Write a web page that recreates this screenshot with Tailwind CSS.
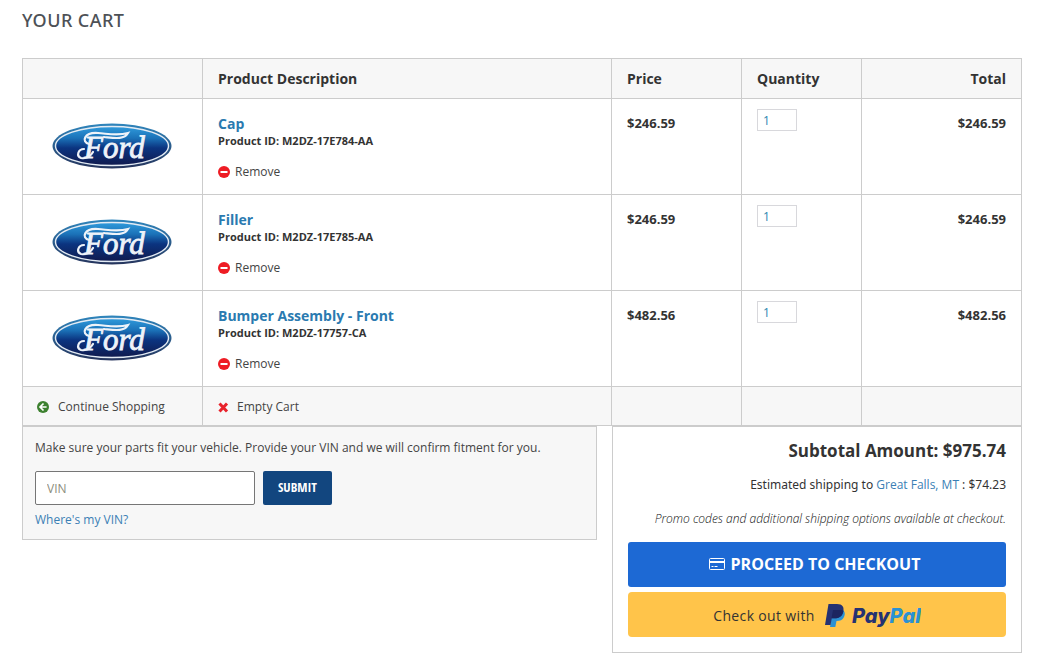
<!DOCTYPE html>
<html lang="en">
<head>
    <meta charset="UTF-8">
    <meta name="viewport" content="width=device-width, initial-scale=1.0">
    <title>Your Cart</title>
    <script src="https://cdn.jsdelivr.net/npm/@tailwindcss/browser@4"></script>
</head>
<body class="bg-white font-['Open_Sans',sans-serif] text-[12px] text-[#333]">
    <main class="pt-[10px] pr-[17px] pb-[14px] pl-[22px]">
        <h1 class="font-['Noto_Sans','Open_Sans',sans-serif] text-[18px] leading-[20px] font-medium tracking-wide text-[#4d5156]">YOUR CART</h1>

        <table class="mt-7 w-full table-fixed border-collapse [&_td]:border [&_td]:border-[#ccc] [&_th]:border [&_th]:border-[#ccc]">
            <colgroup>
                <col class="w-[180px]">
                <col>
                <col class="w-[130px]">
                <col class="w-[120px]">
                <col class="w-[160px]">
            </colgroup>
            <thead>
                <tr class="h-10 bg-[#f7f7f7] text-left text-[14px]">
                    <th></th>
                    <th class="px-[15px] font-bold">Product Description</th>
                    <th class="px-[15px] font-bold">Price</th>
                    <th class="px-[15px] font-bold">Quantity</th>
                    <th class="px-[15px] text-right font-bold">Total</th>
                </tr>
            </thead>
            <tbody>
                <tr class="h-24 align-top">
                    <td class="pt-6 pr-[2px]">
                        <!-- The other rows reuse this logo and the minus icon -->
                        <svg class="mx-auto h-[46px] w-[120px]" viewBox="0 0 120 46" role="img" aria-label="Ford">
                            <defs>
                                <linearGradient id="fordBlue" x1="0" y1="0" x2="0" y2="1">
                                    <stop offset="0" stop-color="#2f9bdc"/>
                                    <stop offset="0.3" stop-color="#1b72b8"/>
                                    <stop offset="0.55" stop-color="#0b3480"/>
                                    <stop offset="1" stop-color="#101a4e"/>
                                </linearGradient>
                                <linearGradient id="fordRim" x1="0" y1="0" x2="0" y2="1">
                                    <stop offset="0" stop-color="#2f86bd"/>
                                    <stop offset="1" stop-color="#26345c"/>
                                </linearGradient>
                            </defs>
                            <g id="ford">
                                <ellipse cx="60" cy="23" rx="59.5" ry="22.5" fill="url(#fordRim)"/>
                                <ellipse cx="60" cy="23" rx="56.5" ry="19.5" fill="url(#fordBlue)" stroke="#e3ebf4" stroke-width="1.4"/>
                                <path d="M37 21 C29 19 32 9 46 10 C58 11 66 13 76 10 C72 17 62 15 52 14" fill="none" stroke="#eef3f9" stroke-width="2.2" stroke-linecap="round"/>
                                <path d="M32 26 C26 26 24 33 29 35 C34 36 38 34 41 29" fill="none" stroke="#eef3f9" stroke-width="2.2" stroke-linecap="round"/>
                                <text x="32" y="35" font-family="Liberation Serif, serif" font-size="31" font-style="italic" fill="#eef3f9" stroke="#eef3f9" stroke-width="0.8">Ford</text>
                            </g>
                        </svg>
                    </td>
                    <td class="px-[15px] pt-4">
                        <a href="#" class="block text-[14px] leading-[18px] font-bold text-[#2a7ab0]">Cap</a>
                        <p class="text-[11px] leading-4 font-bold">Product ID: M2DZ-17E784-AA</p>
                        <button type="button" class="mt-[13px] flex items-center gap-[5px] leading-5 text-[#444]">
                            <svg class="size-3" viewBox="0 0 12 12">
                                <g id="minus">
                                    <circle cx="6" cy="6" r="6" fill="#ee1c24"/>
                                    <rect x="2.5" y="5" width="7" height="2" fill="#fff"/>
                                </g>
                            </svg>
                            Remove
                        </button>
                    </td>
                    <td class="px-[15px] pt-4 text-[13px] leading-4 font-bold">$246.59</td>
                    <td class="px-[15px] pt-[10px]"><input type="text" value="1" aria-label="Quantity of Cap" class="block h-[22px] w-10 border border-[#d8d8dc] px-[5px] text-[#2a85b0]"></td>
                    <td class="px-[15px] pt-4 text-right text-[13px] leading-4 font-bold">$246.59</td>
                </tr>
                <tr class="h-24 align-top">
                    <td class="pt-6 pr-[2px]"><svg class="mx-auto h-[46px] w-[120px]" viewBox="0 0 120 46" role="img" aria-label="Ford"><use href="#ford"/></svg></td>
                    <td class="px-[15px] pt-4">
                        <a href="#" class="block text-[14px] leading-[18px] font-bold text-[#2a7ab0]">Filler</a>
                        <p class="text-[11px] leading-4 font-bold">Product ID: M2DZ-17E785-AA</p>
                        <button type="button" class="mt-[13px] flex items-center gap-[5px] leading-5 text-[#444]"><svg class="size-3" viewBox="0 0 12 12"><use href="#minus"/></svg>Remove</button>
                    </td>
                    <td class="px-[15px] pt-4 text-[13px] leading-4 font-bold">$246.59</td>
                    <td class="px-[15px] pt-[10px]"><input type="text" value="1" aria-label="Quantity of Filler" class="block h-[22px] w-10 border border-[#d8d8dc] px-[5px] text-[#2a85b0]"></td>
                    <td class="px-[15px] pt-4 text-right text-[13px] leading-4 font-bold">$246.59</td>
                </tr>
                <tr class="h-24 align-top">
                    <td class="pt-6 pr-[2px]"><svg class="mx-auto h-[46px] w-[120px]" viewBox="0 0 120 46" role="img" aria-label="Ford"><use href="#ford"/></svg></td>
                    <td class="px-[15px] pt-4">
                        <a href="#" class="block text-[14px] leading-[18px] font-bold text-[#2a7ab0]">Bumper Assembly - Front</a>
                        <p class="text-[11px] leading-4 font-bold">Product ID: M2DZ-17757-CA</p>
                        <button type="button" class="mt-[13px] flex items-center gap-[5px] leading-5 text-[#444]"><svg class="size-3" viewBox="0 0 12 12"><use href="#minus"/></svg>Remove</button>
                    </td>
                    <td class="px-[15px] pt-4 text-[13px] leading-4 font-bold">$482.56</td>
                    <td class="px-[15px] pt-[10px]"><input type="text" value="1" aria-label="Quantity of Bumper Assembly - Front" class="block h-[22px] w-10 border border-[#d8d8dc] px-[5px] text-[#2a85b0]"></td>
                    <td class="px-[15px] pt-4 text-right text-[13px] leading-4 font-bold">$482.56</td>
                </tr>
            </tbody>
            <tfoot>
                <tr class="h-[39px] bg-[#f7f7f7] text-[#444]">
                    <td class="px-[14px] pt-[2px]">
                        <a href="#" class="flex items-center gap-[9px]">
                            <svg class="size-3" viewBox="0 0 12 12" fill="none">
                                <circle cx="6" cy="6" r="6" fill="#3d8130"/>
                                <path d="M6.5 2.5 L3 6 L6.5 9.5 M3.2 6 H9.6" stroke="#fff" stroke-width="1.7"/>
                            </svg>
                            Continue Shopping
                        </a>
                    </td>
                    <td class="px-[15px] pt-[2px]">
                        <button type="button" class="flex items-center gap-2">
                            <svg class="size-[11px]" viewBox="0 0 11 11"><path d="M1.5 1.5 L9 9.5 M9 1.5 L1.5 9.5" stroke="#e8222b" stroke-width="3"/></svg>
                            Empty Cart
                        </button>
                    </td>
                    <td></td>
                    <td></td>
                    <td></td>
                </tr>
            </tfoot>
        </table>

        <div class="flex items-start gap-[15px]">
            <!-- VIN check -->
            <form class="flex-1 border border-[#ccc] bg-[#f7f7f7] px-3 pt-[11px] pb-[9px] text-[#444]">
                <label for="vin" class="block leading-5">Make sure your parts fit your vehicle. Provide your VIN and we will confirm fitment for you.</label>
                <div class="mt-[13px] flex gap-2">
                    <input type="text" id="vin" name="vin" placeholder="VIN" class="h-[34px] w-[220px] rounded-xs border border-[#767676] bg-white px-[11px] placeholder:text-[#8c8c7c]">
                    <button type="submit" class="h-[34px] w-[69px] rounded-xs bg-[#12467f] font-['Open_Sans_Condensed','Liberation_Sans_Narrow','DejaVu_Sans_Condensed',sans-serif] text-[13px] font-bold text-white">SUBMIT</button>
                </div>
                <a href="#" class="mt-[5px] block leading-5 text-[#3b7fb5]">Where's my VIN?</a>
            </form>

            <!-- Order summary -->
            <section class="w-[410px] border border-[#ccc] bg-white p-[15px] pt-3 text-right">
                <p class="text-[17px] leading-6 font-bold">Subtotal Amount: $975.74</p>
                <p class="mt-3 font-['Noto_Sans','Open_Sans',sans-serif] leading-5">Estimated shipping to <a href="#" class="font-['Open_Sans',sans-serif] text-[#3b7fb5]">Great Falls, MT</a> : $74.23</p>
                <p class="mt-[14px] leading-5 font-light text-[#111] italic">Promo codes and additional shipping options available at checkout.</p>
                <button type="button" class="mt-[13px] flex h-[45px] w-full items-center justify-center gap-[6px] rounded-[3px] bg-[#1d69d4] pr-[5px] pb-[2px] text-[16px] font-bold text-white">
                    <svg class="h-3 w-4" viewBox="0 0 16 12" fill="none" stroke="#fff">
                        <rect x="0.5" y="0.5" width="15" height="11" rx="1"/>
                        <path d="M1 4 H15" stroke-width="2"/>
                        <path d="M2.5 8.5 H4.5 M5.5 8.5 H8.5"/>
                    </svg>
                    PROCEED TO CHECKOUT
                </button>
                <button type="button" class="mt-[5px] flex h-[45px] w-full items-center justify-center gap-[10px] rounded-[4px] bg-[#ffc44a] pt-[2px] text-[14px] tracking-wide">
                    Check out with
                    <svg class="h-6 w-24 tracking-normal" viewBox="0 0 96 24" role="img" aria-label="PayPal">
                        <path d="M7.5 5 H16.5 C20 6.5 20.5 10 19 13 C17.5 16 15 17 11.5 17 L10.3 23 H5 Z" fill="#2b91d3"/>
                        <path d="M3.5 0 H12 C17.5 0 19.5 3 18.2 8 C17 12.5 14 14.3 9.5 14.3 H6.8 L5.5 21 H0 Z" fill="#253272"/>
                        <path d="M8 6 H16 C18.5 6 18.5 7 18.2 8 C17 12.5 14 14.3 9.5 14.3 H6.5 Z" fill="#1c2560"/>
                        <text x="27" y="19" font-family="Inter, sans-serif" font-size="20" font-weight="800" font-style="italic" fill="#253272">Pay<tspan fill="#2b91d3">Pal</tspan></text>
                    </svg>
                </button>
            </section>
        </div>
    </main>
</body>
</html>
